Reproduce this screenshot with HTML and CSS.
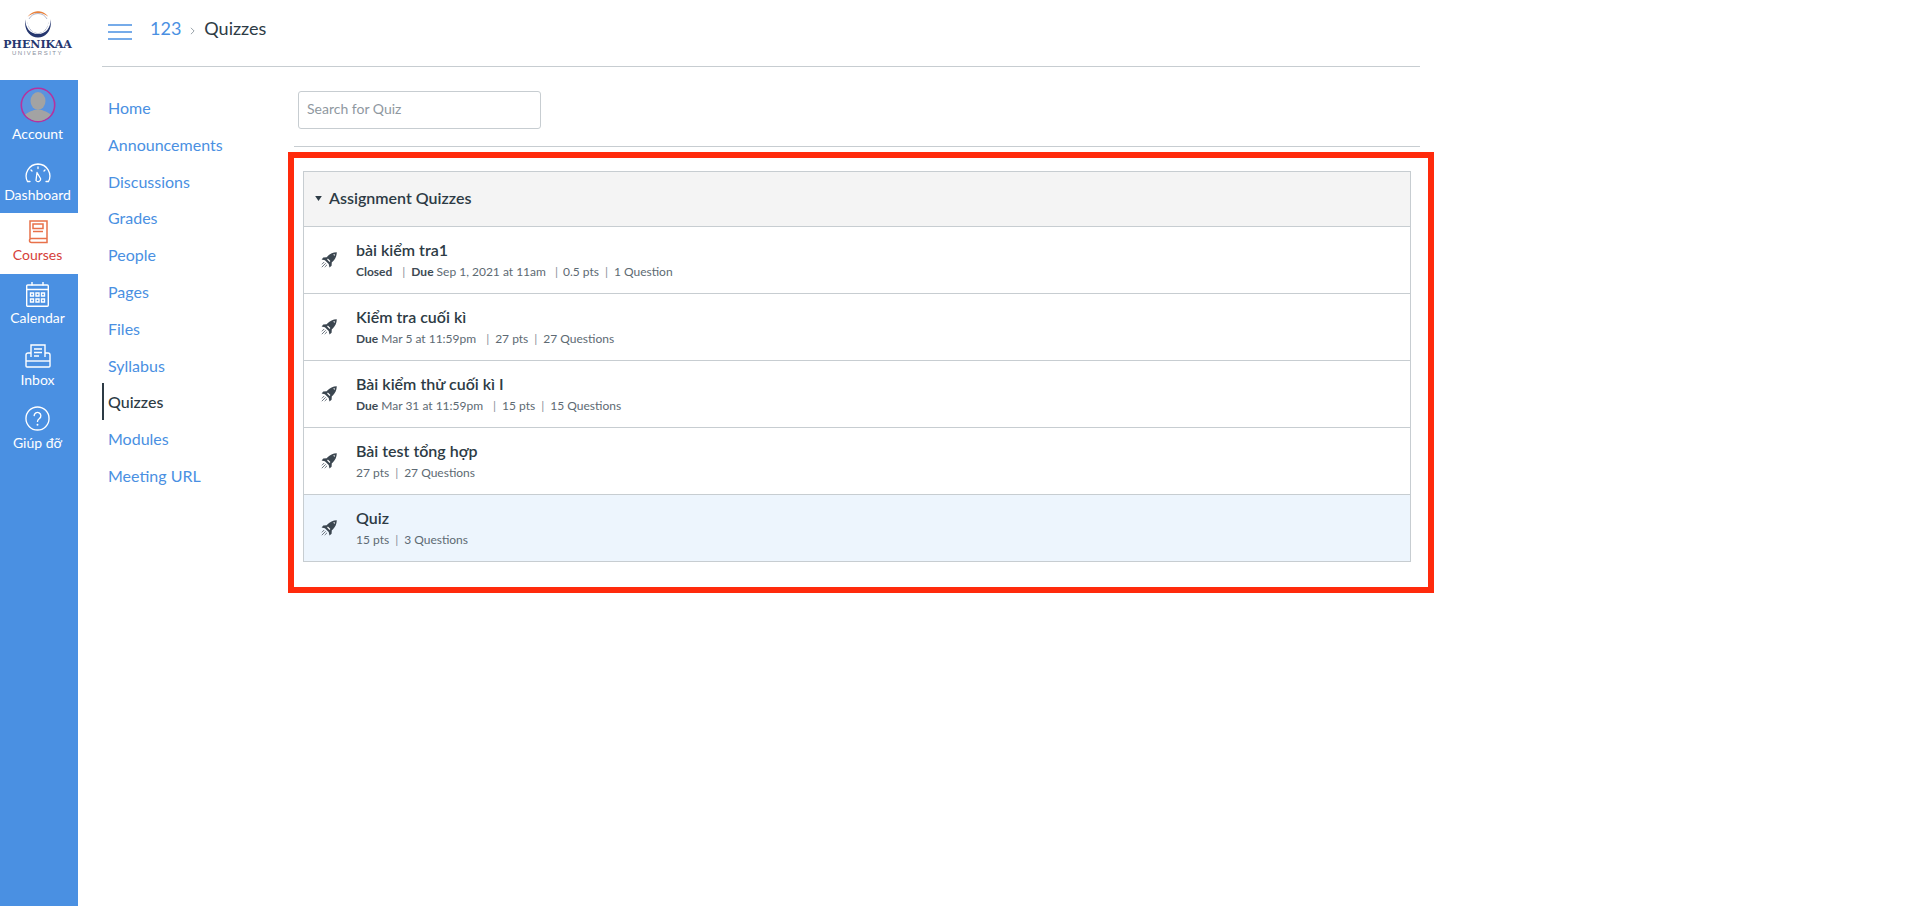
FILE: index.html
```html
<!DOCTYPE html>
<html lang="vi">
<head>
<meta charset="utf-8">
<title>Quizzes</title>
<link rel="stylesheet" href="styles.css">
</head>
<body>
<aside class="side">
  <div class="logo">
    <svg class="logo-ring" viewBox="0 0 28 27" width="28" height="27">
      <path d="M1.500 8 C-.5 19 6 26.500 14 26.500 C22 26.500 28.500 19 26.500 8 C27 15 23 23 14 23 C5 23 1 15 1.500 8Z" fill="#26376f"/>
      <path d="M4 9 A11 11 0 0 0 9 21 A12 12 0 0 0 19 21 A11 11 0 0 0 24 9 A11.500 11.500 0 0 1 14 22.500 A11.500 11.500 0 0 1 4 9Z" fill="#26376f"/>
      <path d="M3.500 6 C7 1 12 .3 14 .3 C16.500 .3 21 1 24.500 6 C20.500 2.500 17 2 14 2 C11 2 7.500 2.500 3.500 6Z" fill="#e9813b"/>
      <path d="M14 2.500 A10.500 10.500 0 0 0 5 8 M14 2.500 A10.500 10.500 0 0 1 23 8" fill="none" stroke="#26376f" stroke-width=".7" opacity=".5"/>
    </svg>
    <div class="logo-name">PHENIKAA</div>
    <div class="logo-sub">UNIVERSITY</div>
  </div>
  <nav class="global">
    <a class="g g-account">
      <svg class="avatar" viewBox="0 0 36 36" width="36" height="36">
        <defs><clipPath id="av"><circle cx="18" cy="18" r="16"/></clipPath></defs>
        <circle cx="18" cy="18" r="16.700" fill="#5a93df" stroke="#b5329f" stroke-width="1.600"/>
        <g clip-path="url(#av)" fill="#a3a3a3">
          <ellipse cx="18" cy="14" rx="7.500" ry="9"/>
          <path d="M2 36 C2 26 10 25 14 23 H22 C26 25 34 26 34 36Z"/>
        </g>
      </svg>
      <span>Account</span>
    </a>
    <a class="g g-dash">
      <svg class="ico" viewBox="0 0 26 20" width="26" height="20" fill="none" stroke="#fff" stroke-width="1.300" stroke-linecap="round">
        <path d="M5 18.500H2.500A12 12 0 0 1 13 1 A12 12 0 0 1 23.500 18.500H21"/>
        <path d="M13 4v1.500M6 7l1 1M20 7l-1 1"/>
        <path d="M12 9.500L15.500 15.500A2.500 2.500 0 0 1 11 17.500Z" stroke-linejoin="round"/>
      </svg>
      <span>Dashboard</span>
    </a>
    <a class="g g-active">
      <svg class="ico" viewBox="0 0 20 24" width="20" height="24" fill="none" stroke="#e8714a" stroke-width="1.500">
        <path d="M2 18.500V1h17v17.500H3.500a2 2 0 0 0 0 4H19V18.500"/>
        <rect x="5" y="4" width="10" height="4.500"/>
        <path d="M5 11.500h10"/>
      </svg>
      <span>Courses</span>
    </a>
    <a class="g g-cal">
      <svg class="ico" viewBox="0 0 23 25" width="23" height="25" fill="none" stroke="#fff" stroke-width="1.400">
        <rect x=".7" y="3" width="21.600" height="21.300" rx="1"/>
        <path d="M1 7.500h21M6 0v3.500M17 0v3.500"/>
        <path d="M4.500 11h3v3h-3zM10 11h3v3h-3zM15.500 11h3v3h-3zM4.500 17h3v3h-3zM10 17h3v3h-3zM15.500 17h3v3h-3z"/>
      </svg>
      <span>Calendar</span>
    </a>
    <a class="g g-inbox">
      <svg class="ico" viewBox="0 0 26 24" width="26" height="24" fill="none" stroke="#fff" stroke-width="1.400">
        <path d="M6 13V1h14v12"/>
        <path d="M9 5h8M9 8.500h8M9 12h5"/>
        <path d="M6 9H3a2 2 0 0 0-2 2v11a1 1 0 0 0 1 1h22a1 1 0 0 0 1-1V11a2 2 0 0 0-2-2h-3"/>
        <path d="M1 17h24"/>
      </svg>
      <span>Inbox</span>
    </a>
    <a class="g g-help">
      <svg class="ico" viewBox="0 0 26 26" width="25" height="25" fill="none" stroke="#fff" stroke-width="1.400">
        <circle cx="13" cy="13" r="12"/>
        <path d="M9.500 10a3.500 3.500 0 1 1 5.500 3c-1.300.9-2 1.500-2 3" stroke-linecap="round"/>
        <circle cx="13" cy="19.500" r="1" fill="#fff" stroke="none"/>
      </svg>
      <span>Giúp đỡ</span>
    </a>
  </nav>
</aside>

<div class="main">
  <header class="top">
    <svg class="burger" viewBox="0 0 24 16" width="24" height="16" fill="none" stroke="#4a90e2" stroke-width="1.400">
      <path d="M0 1h24M0 8h24M0 15h24"/>
    </svg>
    <a class="crumb">123</a>
    <svg class="chev" viewBox="0 0 6 10" width="5" height="8" fill="none" stroke="#8b969e" stroke-width="1.100"><path d="M1 1l4 4-4 4"/></svg>
    <span class="crumb-cur">Quizzes</span>
  </header>
  <div class="body">
    <nav class="course">
      <a class="c">Home</a>
      <a class="c">Announcements</a>
      <a class="c">Discussions</a>
      <a class="c">Grades</a>
      <a class="c">People</a>
      <a class="c">Pages</a>
      <a class="c">Files</a>
      <a class="c">Syllabus</a>
      <a class="c c-active">Quizzes</a>
      <a class="c">Modules</a>
      <a class="c">Meeting URL</a>
    </nav>
    <section class="content">
      <div class="search-bar">
        <input class="search" type="text" placeholder="Search for Quiz">
      </div>
      <div class="red">
        <div class="card">
          <div class="card-head">
            <svg class="caret" viewBox="0 0 8 6" width="7" height="5"><path d="M0 0h8L4 6z" fill="#2d3b45"/></svg>
            <span>Assignment Quizzes</span>
          </div>
          <div class="row">
            <svg class="rocket" viewBox="0 0 16 16" width="16" height="16"><use href="#rk"/></svg>
            <div class="info">
              <div class="name">bài kiểm tra1</div>
              <div class="meta"><b>Closed</b><i class="p1">|</i><b>Due</b> Sep 1, 2021 at 11am<i class="p2">|</i>0.5 pts<i>|</i>1 Question</div>
            </div>
          </div>
          <div class="row">
            <svg class="rocket" viewBox="0 0 16 16" width="16" height="16"><use href="#rk"/></svg>
            <div class="info">
              <div class="name">Kiểm tra cuối kì</div>
              <div class="meta"><b>Due</b> Mar 5 at 11:59pm<i class="p1">|</i>27 pts<i>|</i>27 Questions</div>
            </div>
          </div>
          <div class="row">
            <svg class="rocket" viewBox="0 0 16 16" width="16" height="16"><use href="#rk"/></svg>
            <div class="info">
              <div class="name">Bài kiểm thử cuối kì I</div>
              <div class="meta"><b>Due</b> Mar 31 at 11:59pm<i class="p1">|</i>15 pts<i>|</i>15 Questions</div>
            </div>
          </div>
          <div class="row">
            <svg class="rocket" viewBox="0 0 16 16" width="16" height="16"><use href="#rk"/></svg>
            <div class="info">
              <div class="name">Bài test tổng hợp</div>
              <div class="meta">27 pts<i>|</i>27 Questions</div>
            </div>
          </div>
          <div class="row row-hover">
            <svg class="rocket" viewBox="0 0 16 16" width="16" height="16"><use href="#rk"/></svg>
            <div class="info">
              <div class="name">Quiz</div>
              <div class="meta">15 pts<i>|</i>3 Questions</div>
            </div>
          </div>
        </div>
      </div>
    </section>
  </div>
</div>
<svg class="defs" width="0" height="0">
  <symbol id="rk" viewBox="0 0 16 16">
    <path d="M15.800 .2C12 .3 8.800 1.800 6.600 4.200L5.700 5.200 2.300 5.400 .6 7.500 3.900 8.300 7.700 12.100 8.500 15.400 10.600 13.700 10.800 10.300 11.800 9.400C14.200 7.200 15.700 4 15.800 .2Z" fill="#3b4650"/>
    <path d="M12.700 2.300L13.700 3.300M6.500 7L9 9.500" stroke="#fff" stroke-width="1.100" fill="none"/>
    <path d="M3.200 10l-2.300 2.300M4.700 11.300l-3.900 3.900M6 12.800l-2.300 2.300" stroke="#6e7780" stroke-width="1" fill="none"/>
  </symbol>
</svg>
</body>
</html>
```
FILE: styles.css
```css
* { box-sizing: border-box; }
html, body { margin: 0; height: 100%; }
body {
  display: flex;
  min-height: 906px;
  background: #fff;
  font-family: Lato, "Noto Sans", sans-serif;
  color: #2d3b45;
  overflow: hidden;
}
.defs { position: absolute; }
.side { width: 78px; flex: none; display: flex; flex-direction: column; }
.logo { height: 80px; display: flex; flex-direction: column; align-items: center; padding: 11px 3px 0 0; }
.logo-ring { display: block; flex: none; }
.logo-name {
  font-family: "DejaVu Serif", serif;
  font-weight: 700;
  font-size: 11px;
  line-height: 11px;
  color: #26376f;
  margin-top: 1px;
  white-space: nowrap;
}
.logo-sub {
  font-family: "Liberation Sans", sans-serif;
  font-size: 6px;
  line-height: 7px;
  letter-spacing: 1.500px;
  color: #8a8f9e;
}
.global { flex: 1; background: #4a90e2; display: flex; flex-direction: column; }
.g {
  height: 62px;
  display: flex;
  flex-direction: column;
  align-items: center;
  color: #fff;
  font-size: 14px;
  line-height: 18px;
  padding: 8px 3px 0 0;
}
.g .ico { display: block; margin-bottom: 3px; }
.g-account { height: 72px; padding-top: 7px; }
.avatar { display: block; margin-bottom: 2px; }
.g-dash { height: 61px; padding-top: 11px; }
.g-active { background: #fff; color: #d6403a; height: 61px; padding-top: 7px; }
.g-active .ico, .g-cal .ico { margin-bottom: 2px; }

.main { width: 1318px; margin-left: 24px; flex: none; display: flex; flex-direction: column; }
.top {
  height: 67px;
  border-bottom: 1px solid #c7cdd1;
  display: flex;
  align-items: flex-start;
  padding: 24px 0 0 6px;
}
.burger { margin-right: 18px; }
.crumb { color: #4a90e2; font-size: 18px; line-height: 22px; margin-top: -7px; }
.chev { margin: 3px 9px 0 9px; }
.crumb-cur { font-size: 18px; line-height: 22px; margin-top: -7px; color: #2d3b45; }
.body { display: flex; flex: 1; }
.course { width: 192px; flex: none; display: flex; flex-direction: column; padding-top: 23px; margin-top: -1px; }
.c {
  height: 36.800px;
  line-height: 36.800px;
  padding: 1px 0 0 4px;
  font-size: 16px;
  color: #4a90e2;
  border-left: 2px solid transparent;
}
.c-active { color: #2d3b45; border-left-color: #2d3b45; font-weight: 500; }
.content { flex: 1; min-width: 0; }
.search-bar { height: 80px; border-bottom: 1px solid #c7cdd1; padding: 24px 0 0 4px; }
.search {
  display: block;
  width: 243px;
  height: 38px;
  padding: 0 8px 3px;
  border: 1px solid #c7cdd1;
  border-radius: 3px;
  font: 14px Lato, sans-serif;
  color: #2d3b45;
  background: #fff;
}
.search::placeholder { color: #8f989f; opacity: 1; }
.red {
  margin: 5px -14px 0 -6px;
  height: 441px;
  border: 6px solid #ff2a0c;
  padding: 13px 17px 0 9px;
}
.card { border: 1px solid #c7cdd1; border-bottom: 0; background: #fff; }
.card-head {
  height: 55px;
  background: #f4f4f4;
  display: flex;
  align-items: center;
  padding: 0 0 3px 11px;
  font-size: 16px;
  font-weight: 600;
  color: #2d3b45;
  border-bottom: 1px solid #c7cdd1;
}
.caret { margin-right: 7px; margin-top: 1px; }
.row {
  height: 67px;
  display: flex;
  align-items: center;
  border-bottom: 1px solid #c7cdd1;
  padding-left: 17px;
}
.row-hover { background: #edf5fd; }
.rocket { flex: none; margin-right: 19px; }
.name { font-size: 16px; line-height: 20px; font-weight: 600; color: #2d3b45; }
.meta { font-size: 12px; line-height: 16px; margin-top: 4px; color: #5d6a73; }
.meta b { font-weight: 700; color: #3d4a54; }
.meta i { font-style: normal; margin: 0 6px; color: #8a8f99; }
.meta .p1 { margin: 0 6px 0 10px; }
.meta .p2 { margin: 0 5px 0 9px; }
```
